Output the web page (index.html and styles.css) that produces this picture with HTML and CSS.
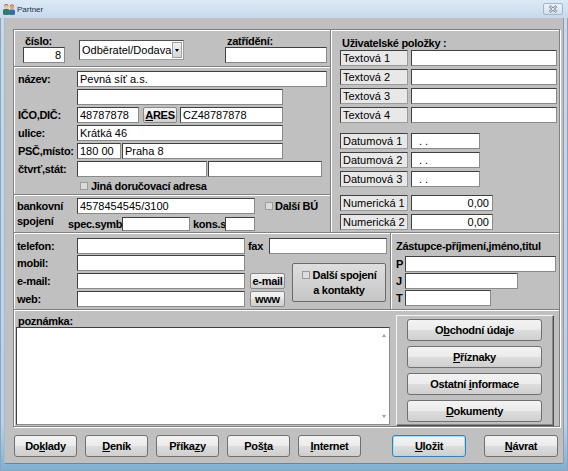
FILE: index.html
```html
<!DOCTYPE HTML>
<html>
<head>
	<meta http-equiv="Content-Type" content="text/html; charset=utf-8">
	<title>Partner</title>
	<link rel="stylesheet" href="styles.css">
</head>
<body>
<div class="window">
	<div class="titlebar">
		<svg class="app-icon" width="12" height="12" viewBox="0 0 12 12">
			<rect x="6" y="6.5" width="6" height="5.5" rx="1.5" fill="#3b6ea5"/>
			<circle cx="9" cy="4" r="2.2" fill="#e2a46e"/>
			<path d="M6.8 3.4 Q9 0.6 11.2 3.4 Q11 1.4 9 1.4 Q7 1.4 6.8 3.4 Z" fill="#6b3b1c"/>
			<rect x="0" y="6" width="6.5" height="6" rx="1.5" fill="#2f7d6e"/>
			<circle cx="3.3" cy="3.6" r="2.3" fill="#f0c090"/>
			<path d="M1 3.4 Q3.3 0 5.6 3.4 Q5.4 1.2 3.3 1.1 Q1.2 1.2 1 3.4 Z" fill="#a4381c"/>
		</svg>
		<span class="title">Partner</span>
		<div class="close">
			<svg width="10" height="8" viewBox="0 0 10 8">
				<path d="M1.5 1 L8.5 7 M8.5 1 L1.5 7" stroke="#7a8b9e" stroke-width="2.6"/>
				<path d="M1.5 1 L8.5 7 M8.5 1 L1.5 7" stroke="#f3f6fa" stroke-width="1"/>
			</svg>
		</div>
	</div>

	<div class="client">
		<div class="frame">
			<!-- horni cast: adresa + uzivatelske polozky -->
			<div class="top etch-b">
				<div class="left-col etch-r">
					<div class="sec-a etch-b">
						<div class="fld">
							<span class="lbl">číslo:</span>
							<input class="ed w42 right" value="8">
						</div>
						<div class="combo">
							<span class="combo-text">Odběratel/Dodava</span>
							<span class="drop"><i class="tri"></i></span>
						</div>
						<div class="fld zat">
							<span class="lbl">zatřídění:</span>
							<input class="ed w102" value="">
						</div>
					</div>

					<div class="sec-b etch-b">
						<div class="row"><span class="lbl lcol">název:</span><input class="ed w250" value="Pevná síť a.s."></div>
						<div class="row"><span class="lcol"></span><input class="ed w206" value=""></div>
						<div class="row"><span class="lbl lcol">IČO,DIČ:</span><input class="ed w62" value="48787878"><button class="btn small ares"><u>A</u>RES</button><input class="ed w103" value="CZ48787878"></div>
						<div class="row"><span class="lbl lcol">ulice:</span><input class="ed w206" value="Krátká 46"></div>
						<div class="row"><span class="lbl lcol">PSČ,místo:</span><input class="ed w44" value="180 00"><input class="ed w161 ml1" value="Praha 8"></div>
						<div class="row"><span class="lbl lcol">čtvrť,stát:</span><input class="ed w130" value=""><input class="ed w114 ml1" value=""></div>
						<div class="row chk-row"><span class="chk"></span><span class="lbl">Jiná doručovací adresa</span></div>
					</div>

					<div class="sec-c">
						<div class="row"><span class="lbl lcol l3">bankovní</span><input class="ed w178" value="4578454545/3100"><span class="chk ml10"></span><span class="lbl">Další BÚ</span></div>
						<div class="row row14">
							<span class="lbl scol">spojení</span>
							<span class="lbl w54">spec.symb</span><input class="ed w68" value="">
							<span class="lbl kons">kons.s</span><input class="ed w30" value="">
						</div>
					</div>
				</div>

				<div class="right-col">
					<div class="lbl utitle">Uživatelské položky :</div>
					<div class="urow"><span class="ulbl">Textová 1</span><input class="ed w146" value=""></div>
					<div class="urow"><span class="ulbl">Textová 2</span><input class="ed w146" value=""></div>
					<div class="urow"><span class="ulbl">Textová 3</span><input class="ed w146" value=""></div>
					<div class="urow"><span class="ulbl">Textová 4</span><input class="ed w146" value=""></div>
					<div class="urow gap10"><span class="ulbl">Datumová 1</span><input class="ed w69 date" value=". ."></div>
					<div class="urow"><span class="ulbl">Datumová 2</span><input class="ed w69 date" value=". ."></div>
					<div class="urow"><span class="ulbl">Datumová 3</span><input class="ed w69 date" value=". ."></div>
					<div class="urow gap8"><span class="ulbl">Numerická 1</span><input class="ed w82 right" value="0,00"></div>
					<div class="urow"><span class="ulbl">Numerická 2</span><input class="ed w82 right" value="0,00"></div>
				</div>
			</div>

			<!-- kontakty -->
			<div class="contact etch-b">
				<div class="c-left etch-r">
					<div class="row">
						<span class="lbl lcol l3">telefon:</span><input class="ed w168" value="">
						<span class="lbl fax">fax</span><input class="ed w118" value="">
					</div>
					<div class="c-block">
						<div class="c-stack">
							<div class="row"><span class="lbl lcol l3">mobil:</span><input class="ed w168" value=""></div>
							<div class="row"><span class="lbl lcol l3">e-mail:</span><input class="ed w168" value=""><button class="btn small sbtn">e-mail</button></div>
							<div class="row"><span class="lbl lcol l3">web:</span><input class="ed w168" value=""><button class="btn small sbtn">www</button></div>
						</div>
						<button class="btn big">
							<span class="big-line"><span class="chk"></span>Další spojení</span>
							<span class="big-line">a kontakty</span>
						</button>
					</div>
				</div>
				<div class="c-right">
					<div class="lbl ztitle">Zástupce-příjmení,jméno,titul</div>
					<div class="prow first"><span class="lbl plbl">P</span><input class="ed w151" value=""></div>
					<div class="prow"><span class="lbl plbl">J</span><input class="ed w113" value=""></div>
					<div class="prow"><span class="lbl plbl">T</span><input class="ed w86" value=""></div>
				</div>
			</div>

			<!-- poznamka + tlacitka -->
			<div class="bottom">
				<div class="memo-col">
					<div class="lbl memo-lbl">poznámka:</div>
					<div class="memo">
						<div class="sbar"><i class="arr up"></i><i class="arr down"></i></div>
					</div>
				</div>
				<div class="panel">
					<button class="btn pbtn">O<u>b</u>chodní údaje</button>
					<button class="btn pbtn"><u>P</u>říznaky</button>
					<button class="btn pbtn">Ostatní <u>i</u>nformace</button>
					<button class="btn pbtn"><u>D</u>okumenty</button>
				</div>
			</div>
		</div>

		<div class="btnbar">
			<button class="btn bbtn">Do<u>k</u>lady</button>
			<button class="btn bbtn"><u>D</u>eník</button>
			<button class="btn bbtn">Příka<u>z</u>y</button>
			<button class="btn bbtn">Poš<u>t</u>a</button>
			<button class="btn bbtn"><u>I</u>nternet</button>
			<button class="btn bbtn save"><u>U</u>ložit</button>
			<button class="btn bbtn back"><u>N</u>ávrat</button>
		</div>
	</div>
</div>
</body>
</html>
```

FILE: styles.css
```css
*{
	box-sizing: border-box;
}
body{
	margin: 0;
	font: 11px "Liberation Sans", Arial, sans-serif;
	color: #000;
}

/* okno */
.window{
	width: 568px;
	height: 471px;
	display: flex;
	flex-direction: column;
	background: linear-gradient(#cadaec 0%, #bcd0e6 90%, #7fb0cf 100%);
	box-shadow: inset 0 0 0 1px #8ea4bd;
}
.titlebar{
	height: 18px;
	display: flex;
	align-items: center;
	padding: 0 5px 0 3px;
	background: linear-gradient(#dde9f6, #c8d9ed);
}
.app-icon{
	flex: none;
}
.title{
	flex: 1;
	margin-left: 2px;
	font-size: 8px;
	color: #1c2f46;
}
.close{
	width: 20px;
	height: 12px;
	display: flex;
	align-items: center;
	justify-content: center;
	border: 1px solid #a3b5ca;
	border-radius: 2px;
	background: linear-gradient(#eef3f9, #d5e0ed);
}
.client{
	flex: 1;
	margin: 0 5px 8px;
	padding: 11px 0 0 8px;
	background: #c0c0c0;
	box-shadow: 0 1px 0 #6f8496, 1px 0 0 #8a9bab, -1px 0 0 #a9b9ca;
}

/* ramecky */
.frame{
	width: 547px;
	height: 398px;
	display: flex;
	flex-direction: column;
	border: 1px solid #808080;
	box-shadow: inset 1px 1px 0 #fff, 1px 1px 0 #fff;
}
.etch-b{
	border-bottom: 1px solid #808080;
	box-shadow: 0 1px 0 #fff;
}
.etch-r{
	border-right: 1px solid #808080;
	box-shadow: 1px 0 0 #fff;
}

/* texty a pole */
.lbl{
	font-weight: bold;
	letter-spacing: -0.3px;
	white-space: nowrap;
}
.ed{
	height: 16px;
	margin: 0;
	padding: 0 2px;
	font: 11px "Liberation Sans", Arial, sans-serif;
	color: #000;
	background: #fff;
	border: 1px solid;
	border-color: #404040 #8a8a8a #8a8a8a #404040;
	outline: none;
	flex: none;
}
.right{
	text-align: right;
	padding-right: 3px;
}
.date{
	padding-left: 7px;
}
.chk{
	width: 8px;
	height: 8px;
	flex: none;
	background: #dcdcdc;
	border: 1px solid #9c9c9c;
}
.ml1{ margin-left: 1px; }
.ml10{ margin-left: 10px; margin-right: 2px; }
.w30{ width: 30px; }
.w42{ width: 42px; }
.w44{ width: 44px; }
.w54{ width: 54px; }
.w62{ width: 62px; }
.w68{ width: 68px; }
.w69{ width: 69px; }
.w82{ width: 82px; }
.w86{ width: 86px; }
.w102{ width: 102px; }
.w103{ width: 103px; }
.w113{ width: 113px; }
.w114{ width: 114px; }
.w118{ width: 118px; }
.w130{ width: 130px; }
.w146{ width: 146px; }
.w151{ width: 151px; }
.w161{ width: 161px; }
.w168{ width: 168px; }
.w178{ width: 178px; }
.w206{ width: 206px; }
.w250{ width: 250px; }

.row{
	display: flex;
	align-items: center;
	height: 16px;
	margin-bottom: 2px;
}
.row14{
	height: 14px;
}
.row14 .ed{
	height: 14px;
}
.lcol{
	width: 63px;
	flex: none;
	padding-left: 4px;
}
.lcol.l3{
	padding-left: 3px;
}

/* horni cast */
.top{
	height: 203px;
	display: flex;
	flex: none;
}
.left-col{
	width: 317px;
	display: flex;
	flex-direction: column;
}
.sec-a{
	height: 37px;
	flex: none;
	display: flex;
	align-items: flex-end;
	padding: 0 0 3px 9px;
}
.fld{
	display: flex;
	flex-direction: column;
}
.fld .lbl{
	padding-left: 2px;
	line-height: 12px;
}
.zat{
	margin-left: 41px;
}
.combo{
	width: 105px;
	height: 20px;
	margin: 0 0 3px 14px;
	display: flex;
	align-items: center;
	background: #fff;
	border: 1px solid;
	border-color: #505050 #9a9a9a #9a9a9a #505050;
	font-size: 11px;
}
.combo-text{
	flex: 1;
	padding-left: 2px;
	white-space: nowrap;
}
.drop{
	width: 10px;
	height: 16px;
	margin-right: 1px;
	flex: none;
	display: flex;
	align-items: center;
	justify-content: center;
	background: linear-gradient(#f0f0f0, #d6d6d6);
	border: 1px solid #a0a0a0;
}
.tri{
	border-left: 2px solid transparent;
	border-right: 2px solid transparent;
	border-top: 3px solid #000;
}
.sec-b{
	height: 128px;
	flex: none;
	padding-top: 4px;
}
.chk-row{
	height: 14px;
	margin: 0;
	padding-left: 66px;
}
.chk-row .chk{
	margin-right: 3px;
}
.sec-c{
	flex: 1;
	padding-top: 3px;
}
.sec-c .row{
	margin-bottom: 3px;
}
.scol{
	width: 54px;
	padding-left: 3px;
	flex: none;
	align-self: flex-start;
	margin-top: -2px;
}
.kons{
	width: 32px;
	margin-left: 3px;
	flex: none;
}

.right-col{
	flex: 1;
	padding: 7px 0 0 9px;
}
.utitle{
	line-height: 13px;
	padding-left: 2px;
}
.urow{
	display: flex;
	height: 16px;
	margin-top: 3px;
}
.utitle + .urow{
	margin-top: 0;
}
.urow.gap10{
	margin-top: 10px;
}
.urow.gap8{
	margin-top: 8px;
}
.ulbl{
	width: 68px;
	margin-right: 3px;
	padding-left: 2px;
	line-height: 14px;
	background: #e8e8e8;
	border: 1px solid;
	border-color: #404040 #9a9a9a #9a9a9a #404040;
	white-space: nowrap;
}

/* kontakty */
.contact{
	height: 77px;
	flex: none;
	display: flex;
}
.c-left{
	width: 377px;
	padding-top: 5px;
}
.c-left > .row{
	margin-bottom: 1px;
}
.fax{
	width: 21px;
	margin-left: 3px;
	flex: none;
}
.c-block{
	display: flex;
	align-items: flex-start;
}
.c-right{
	flex: 1;
	padding: 7px 0 0 5px;
}
.ztitle{
	line-height: 13px;
}
.prow{
	display: flex;
	align-items: center;
	height: 16px;
	margin-top: 1px;
}
.prow.first{
	margin-top: 3px;
}
.plbl{
	width: 9px;
	flex: none;
}

/* poznamka */
.bottom{
	flex: 1;
	display: flex;
}
.memo-col{
	width: 376px;
	padding: 5px 0 0 2px;
}
.memo-lbl{
	line-height: 12px;
	padding-left: 2px;
}
.memo{
	width: 374px;
	height: 98px;
	display: flex;
	justify-content: flex-end;
	background: #fff;
	border: 1px solid;
	border-color: #404040 #8a8a8a #8a8a8a #404040;
}
.sbar{
	width: 11px;
	display: flex;
	flex-direction: column;
	justify-content: space-between;
	align-items: center;
	padding: 6px 0 6px;
}
.arr{
	border-left: 2px solid transparent;
	border-right: 2px solid transparent;
}
.arr.up{
	border-bottom: 3px solid #9a9a9a;
}
.arr.down{
	border-top: 3px solid #9a9a9a;
}
.panel{
	width: 158px;
	height: 111px;
	margin: 5px 0 0 6px;
	padding: 3px 0 0 10px;
	border: 1px solid;
	border-color: #f4f4f4 #505050 #505050 #f4f4f4;
	box-shadow: inset -1px -1px 0 #8a8a8a;
}

/* tlacitka */
.btn{
	display: block;
	padding: 0;
	text-align: center;
	font: bold 11px "Liberation Sans", Arial, sans-serif;
	letter-spacing: -0.3px;
	white-space: nowrap;
	color: #000;
	border: 1px solid #707070;
	border-radius: 3px;
	background: linear-gradient(#f3f3f3 0%, #ebebeb 50%, #dddddd 51%, #cfcfcf 100%);
}
.btn.small{
	border-radius: 2px;
	border-color: #8a8a8a;
}
.btn.ares{
	width: 34px;
	height: 16px;
	margin: 0 3px 0 4px;
}
.btn.sbtn{
	width: 35px;
	height: 16px;
	margin-left: 5px;
}
.btn.big{
	width: 94px;
	height: 39px;
	margin: 8px 0 0 7px;
	border-radius: 2px;
	border-color: #6a6a6a;
	background: linear-gradient(#dedede, #c6c6c6);
	line-height: 15px;
}
.big-line{
	display: flex;
	align-items: center;
	justify-content: center;
}
.big-line .chk{
	margin-right: 3px;
}
.pbtn{
	width: 135px;
	height: 22px;
	margin-bottom: 5px;
}
.btnbar{
	display: flex;
	margin: 8px 0 0 1px;
}
.bbtn{
	width: 63px;
	height: 22px;
	margin-right: 8px;
}
.btn.save{
	width: 74px;
	margin-left: 23px;
	margin-right: 18px;
	border-color: #3c7fb1;
	box-shadow: inset 0 0 0 1px #a6dbf3;
}
.btn.back{
	width: 74px;
	margin-right: 0;
}
```
